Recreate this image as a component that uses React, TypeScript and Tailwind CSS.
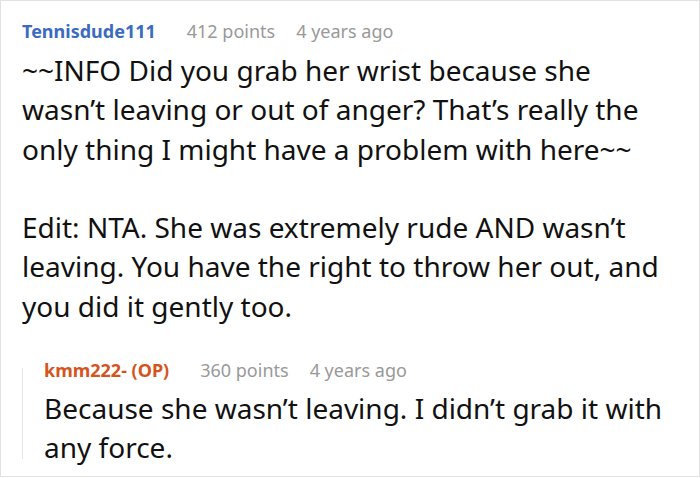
import React from 'react';

type Comment = {
  author: string;
  isOp?: boolean;
  points: number;
  age: string;
  paragraphs: string[];
};

const parent: Comment = {
  author: 'Tennisdude111',
  points: 412,
  age: '4 years ago',
  paragraphs: [
    '~~INFO Did you grab her wrist because she wasn’t leaving or out of anger? That’s really the only thing I might have a problem with here~~',
    'Edit: NTA. She was extremely rude AND wasn’t leaving. You have the right to throw her out, and you did it gently too.',
  ],
};

const reply: Comment = {
  author: 'kmm222- (OP)',
  isOp: true,
  points: 360,
  age: '4 years ago',
  paragraphs: ['Because she wasn’t leaving. I didn’t grab it with any force.'],
};

function CommentHeader({ comment, leading }: { comment: Comment; leading: string }) {
  return (
    <div className={`flex items-baseline text-[18px] ${leading}`}>
      <span className={`font-bold ${comment.isOp ? 'text-[#d5541e]' : 'text-[#3b6bbf]'}`}>{comment.author}</span>
      <span className="ml-[31px] text-[#999999]">{comment.points} points</span>
      <span className="ml-[21px] text-[#999999]">{comment.age}</span>
    </div>
  );
}

function CommentBody({ comment }: { comment: Comment }) {
  return (
    <div className="text-[28px] leading-[39.3px] text-[#111111]">
      {comment.paragraphs.map((p, i) => (
        <p key={i} className={i > 0 ? 'mt-[39.3px]' : ''}>
          {p}
        </p>
      ))}
    </div>
  );
}

export default function App() {
  return (
    <div
      className="h-[478px] w-[700px] bg-white"
      style={{ fontFamily: '"Noto Sans", "Open Sans", sans-serif' }}
    >
      <div className="h-[477px] w-[700px] border border-[#e2e2e2] pl-[21px] pr-[29px] pt-[10px]">
        <CommentHeader comment={parent} leading="leading-[40px]" />
        <CommentBody comment={parent} />

        <div className="mt-[30px] flex">
          <div className="mb-[9px] mt-[12px] w-px shrink-0 bg-[#e4e4e4]" />
          <div className="pl-[21px]">
            <CommentHeader comment={reply} leading="leading-[28px]" />
            <div className="mt-[5px]">
              <CommentBody comment={reply} />
            </div>
          </div>
        </div>
      </div>
    </div>
  );
}
